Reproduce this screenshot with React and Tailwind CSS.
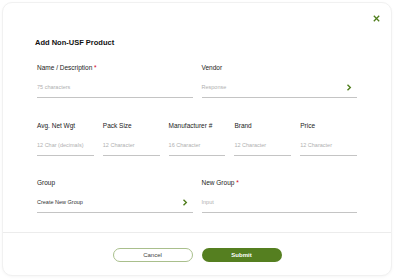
import React from 'react';

const Chevron = () => (
  <svg width="6" height="7" viewBox="0 0 6 7" fill="none" className="shrink-0">
    <path d="M1.5 0.8 L4.3 3.5 L1.5 6.2" stroke="#4f7d1c" strokeWidth="1.4" />
  </svg>
);

const Field = ({ label, required, placeholder, value, chevron }) => (
  <div className="flex flex-col">
    <div className="h-[8px] text-[6.5px] leading-[8px] text-[#222]">
      {label}
      {required && <span className="text-[#d0021b]"> *</span>}
    </div>
    <div className="mt-[5px] flex h-[21px] items-center justify-between border-b border-[#c4c4c4] pr-[5px]">
      {value ? (
        <span className="text-[5.5px] text-[#333]">{value}</span>
      ) : (
        <span className="text-[5.5px] text-[#b0b0b0]">{placeholder}</span>
      )}
      {chevron && <Chevron />}
    </div>
  </div>
);

const App = () => {
  return (
    <div className="h-[280px] w-[395px] bg-white p-[2px]" style={{ fontFamily: '"Liberation Sans", Arial, sans-serif' }}>
      <div className="relative flex h-[274px] w-[390px] flex-col rounded-[10px] border border-[#f1f1f1] bg-white shadow-[0_1px_3px_rgba(0,0,0,0.04)]">
        {/* close */}
        <button className="absolute right-[11px] top-[11px] flex h-[8px] w-[8px] items-center justify-center">
          <svg width="7" height="7" viewBox="0 0 7 7" fill="none">
            <path d="M0.8 0.8 L6.2 6.2 M6.2 0.8 L0.8 6.2" stroke="#4f7d1c" strokeWidth="1.3" />
          </svg>
        </button>

        <div className="px-[32px] pt-[35px] text-[7.5px] font-bold leading-[10px] text-[#111]">
          Add Non-USF Product
        </div>

        <div className="mt-[16px] px-[34px]">
          <div className="grid grid-cols-2 gap-x-[9px]">
            <Field label="Name / Description" required placeholder="75 characters" />
            <Field label="Vendor" placeholder="Response" chevron />
          </div>

          <div className="mt-[24px] grid grid-cols-5 gap-x-[9px]">
            <Field label="Avg. Net Wgt" placeholder="12 Char (decimals)" />
            <Field label="Pack Size" placeholder="12 Character" />
            <Field label="Manufacturer #" placeholder="16 Character" />
            <Field label="Brand" placeholder="12 Character" />
            <Field label="Price" placeholder="12 Character" />
          </div>

          <div className="mt-[23px] grid grid-cols-2 gap-x-[9px]">
            <Field label="Group" value="Create New Group" chevron />
            <Field label="New Group" required placeholder="Input" />
          </div>
        </div>

        <div className="mt-[19px] border-t border-[#ececec]" />

        <div className="flex justify-center gap-[9px] pt-[15px]">
          <button className="h-[14px] w-[80px] rounded-full border border-[#a9bf8c] text-[6px] text-[#444]">
            Cancel
          </button>
          <button className="h-[14px] w-[80px] rounded-full bg-[#557f20] text-[6px] font-semibold text-white">
            Submit
          </button>
        </div>
      </div>
    </div>
  );
};

export default App;
